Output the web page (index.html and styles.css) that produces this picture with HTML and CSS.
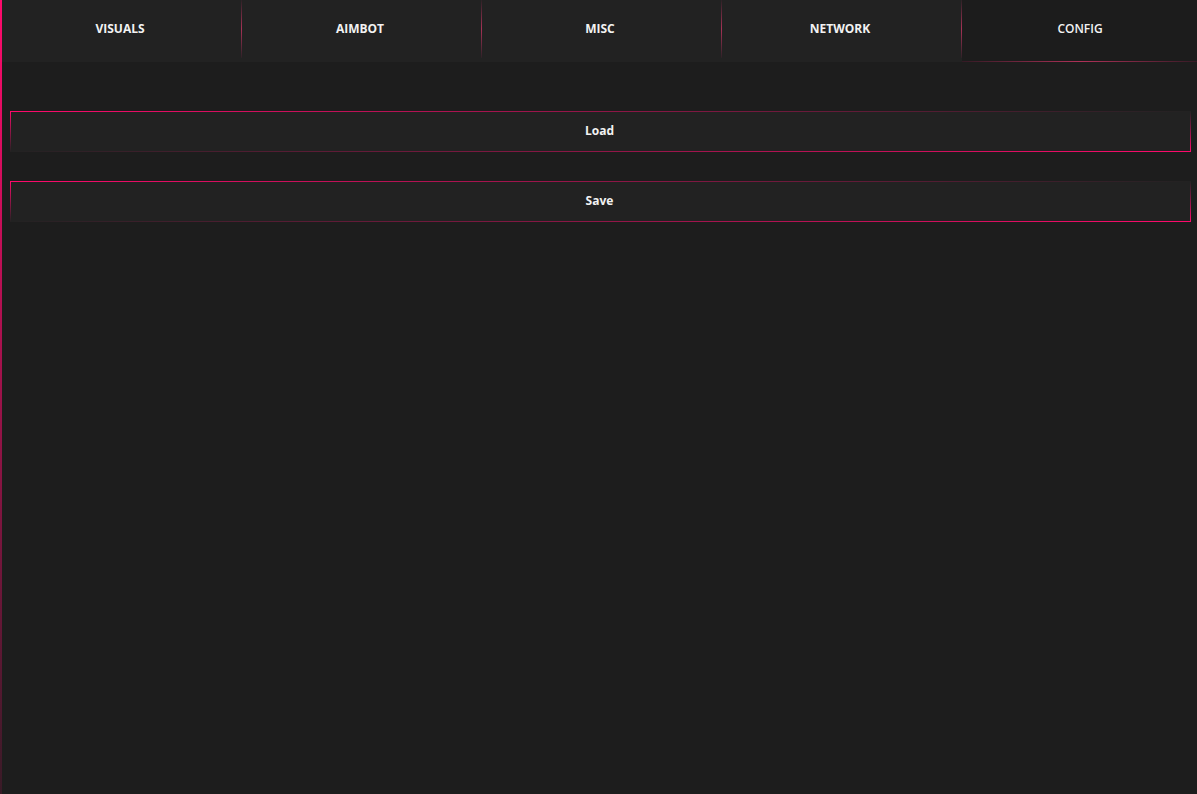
FILE: index.html
```html
<!DOCTYPE html>
<html>
<head>
    <title>Menu</title>
    <link rel="stylesheet" href="styles.css">
</head>
<body>
    <div class="menu">
        <div class="tabs">
            <div class="tab">VISUALS</div>
            <div class="tab">AIMBOT</div>
            <div class="tab">MISC</div>
            <div class="tab">NETWORK</div>
            <div class="tab active">CONFIG</div>
        </div>

        <div class="page">
            <button class="btn">Load</button>
            <button class="btn">Save</button>
        </div>
    </div>
</body>
</html>
```

FILE: styles.css
```css
html, body {
    margin: 0;
    height: 100%;
}
body {
    background: #1d1d1d;
    font-family: "Open Sans", "Liberation Sans", sans-serif;
    color: #f2f2f2;
    overflow: hidden;
}
.menu {
    position: relative;
    height: 100%;
}
/* accent strip down the left edge */
.menu::before {
    content: "";
    position: absolute;
    left: 0;
    top: 0;
    bottom: 0;
    width: 2px;
    z-index: 2;
    background: linear-gradient(to bottom, #ff0a6c, rgba(255, 10, 108, 0.12));
}
.tabs {
    display: flex;
    height: 62px;
    background: #222222;
    overflow: hidden;
}
.tab {
    position: relative;
    flex: 0 0 240px;
    display: flex;
    align-items: center;
    justify-content: center;
    font-size: 12px;
    font-weight: 700;
    padding-bottom: 6px;
    box-sizing: border-box;
}
.tab + .tab::before {
    content: "";
    position: absolute;
    left: 1px;
    top: 0;
    width: 1px;
    height: 58px;
    background: linear-gradient(to bottom, rgba(255, 10, 108, 0.05), rgba(255, 60, 120, 0.6), rgba(255, 10, 108, 0.05));
}
.tab.active {
    background: linear-gradient(#1c1c1c, #1c1c1c) 2px 0 / 100% 100% no-repeat;
    font-weight: 600;
}
.tab.active::after {
    content: "";
    position: absolute;
    left: 2px;
    right: 0;
    bottom: 0;
    height: 1px;
    background: linear-gradient(to right, rgba(255, 10, 108, 0.1), rgba(255, 60, 120, 0.65), rgba(255, 10, 108, 0.1));
}
.page {
    display: flex;
    flex-direction: column;
    gap: 29px;
    padding: 49px 6px 0 10px;
}
.btn {
    height: 41px;
    border: none;
    padding: 0 2px 2px 0;
    font-family: inherit;
    font-size: 12px;
    font-weight: 700;
    color: #f2f2f2;
    cursor: pointer;
    background:
        linear-gradient(to right, #ff0a6c, rgba(255, 10, 108, 0)) left top / 100% 1px no-repeat,
        linear-gradient(to bottom, #ff0a6c, rgba(255, 10, 108, 0)) left top / 1px 100% no-repeat,
        linear-gradient(to left, #ff0a6c, rgba(255, 10, 108, 0)) right bottom / 100% 1px no-repeat,
        linear-gradient(to top, #ff0a6c, rgba(255, 10, 108, 0)) right bottom / 1px 100% no-repeat,
        #222222;
}
```
